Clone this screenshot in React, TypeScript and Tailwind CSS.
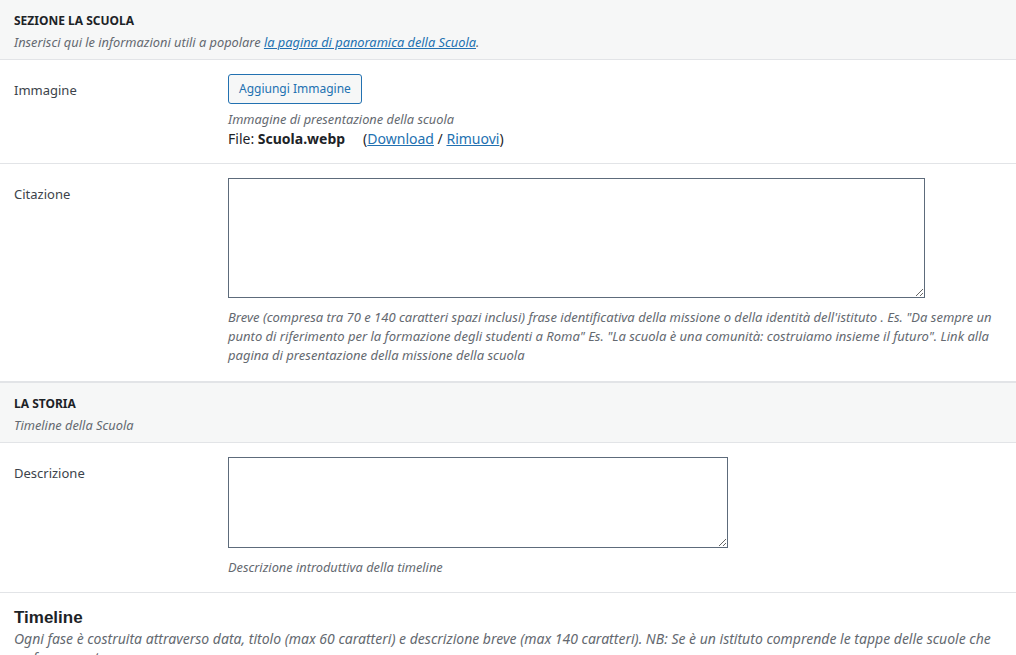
import React from "react";

const font = { fontFamily: '"Noto Sans", "DejaVu Sans", sans-serif' };

function SectionHeader({ title, children }: { title: string; children: React.ReactNode }) {
  return (
    <div className="bg-[#f6f7f7] border-b border-[#e2e4e7] px-[14px] pt-[13px] pb-[7px]">
      <h3 className="text-[12px] font-bold uppercase text-[#1d2327] leading-[16px]">{title}</h3>
      <p className="text-[12.8px] italic text-[#646970] leading-[20px] mt-[3px]">{children}</p>
    </div>
  );
}

function Row({ label, children, className = "" }: { label: string; children: React.ReactNode; className?: string }) {
  return (
    <div className={`flex border-b border-[#e2e4e7] ${className}`}>
      <div className="w-[228px] shrink-0 pl-[14px] pt-[20px] text-[13px] text-[#3c434a] leading-[20px]">{label}</div>
      <div className="flex-1 pr-[14px]">{children}</div>
    </div>
  );
}

function Textarea({ w, h }: { w: string; h: string }) {
  return (
    <textarea
      className={`${w} ${h} block border border-[#5d6b7b] bg-white rounded-none resize`}
      defaultValue=""
    />
  );
}

export default function App() {
  return (
    <div className="w-[1016px] h-[655px] overflow-hidden bg-white" style={font}>
      <SectionHeader title="Sezione la scuola">
        Inserisci qui le informazioni utili a popolare{" "}
        <a href="#" className="text-[#2271b1] underline">la pagina di panoramica della Scuola</a>.
      </SectionHeader>

      <Row label="Immagine" className="h-[104px]">
        <div className="pt-[14px]">
          <button className="h-[30px] px-[10px] border border-[#2271b1] rounded-[3px] bg-[#f6f7f7] text-[#2271b1] text-[12px] leading-[28px]">
            Aggiungi Immagine
          </button>
          <p className="text-[12.8px] italic text-[#646970] leading-[19px] mt-[6px]">Immagine di presentazione della scuola</p>
          <p className="text-[14px] text-[#1d2327] leading-[19px]">
            File: <b>Scuola.webp</b>
            <span className="ml-[18px]">(</span>
            <a href="#" className="text-[#2271b1] underline">Download</a> /{" "}
            <a href="#" className="text-[#2271b1] underline">Rimuovi</a>)
          </p>
        </div>
      </Row>

      <Row label="Citazione" className="h-[219px] border-b-2">
        <div className="pt-[14px]">
          <Textarea w="w-[697px]" h="h-[120px]" />
          <p className="mt-[10px] text-[13px] italic text-[#646970] leading-[19px]">
            Breve (compresa tra 70 e 140 caratteri spazi inclusi) frase identificativa della missione o della identità dell'istituto . Es. "Da sempre un punto di riferimento per la formazione degli studenti a Roma" Es. "La scuola è una comunità: costruiamo insieme il futuro". Link alla pagina di presentazione della missione della scuola
          </p>
        </div>
      </Row>

      <SectionHeader title="La storia">Timeline della Scuola</SectionHeader>

      <Row label="Descrizione" className="h-[150px]">
        <div className="pt-[14px]">
          <Textarea w="w-[500px]" h="h-[91px]" />
          <p className="mt-[10px] text-[12.8px] italic text-[#646970] leading-[19px]">Descrizione introduttiva della timeline</p>
        </div>
      </Row>

      <div className="px-[14px] pt-[14px]">
        <h2 className="text-[17px] font-bold text-[#1d2327] leading-[22px]" style={{ fontFamily: '"Liberation Sans", Arial, sans-serif' }}>
          Timeline
        </h2>
        <p className="text-[14px] italic text-[#646970] leading-[19px]">
          Ogni fase è costruita attraverso data, titolo (max 60 caratteri) e descrizione breve (max 140 caratteri). NB: Se è un istituto comprende le tappe delle scuole che ne fanno parte.
        </p>
      </div>
    </div>
  );
}
